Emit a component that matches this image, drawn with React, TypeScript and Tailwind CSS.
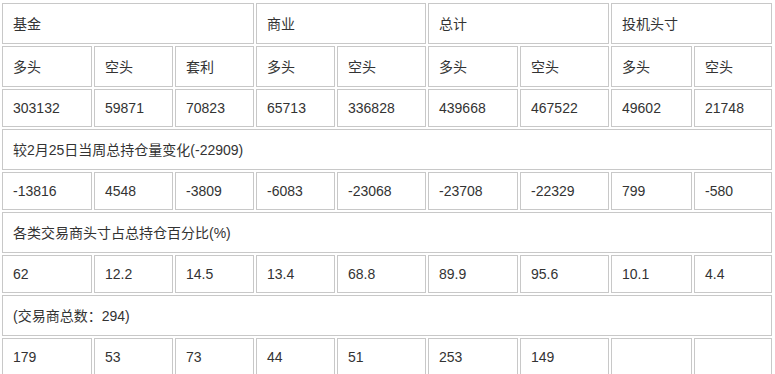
const widths = [90, 79, 79, 79, 89, 90, 89, 81, 78];

const rows: { cells: { text: string; span?: number }[]; tall: boolean }[] = [
  {
    tall: true,
    cells: [
      { text: "基金", span: 3 },
      { text: "商业", span: 2 },
      { text: "总计", span: 2 },
      { text: "投机头寸", span: 2 },
    ],
  },
  {
    tall: true,
    cells: ["多头", "空头", "套利", "多头", "空头", "多头", "空头", "多头", "空头"].map(t => ({ text: t })),
  },
  {
    tall: false,
    cells: ["303132", "59871", "70823", "65713", "336828", "439668", "467522", "49602", "21748"].map(t => ({ text: t })),
  },
  { tall: true, cells: [{ text: "较2月25日当周总持仓量变化(-22909)", span: 9 }] },
  {
    tall: false,
    cells: ["-13816", "4548", "-3809", "-6083", "-23068", "-23708", "-22329", "799", "-580"].map(t => ({ text: t })),
  },
  { tall: true, cells: [{ text: "各类交易商头寸占总持仓百分比(%)", span: 9 }] },
  {
    tall: false,
    cells: ["62", "12.2", "14.5", "13.4", "68.8", "89.9", "95.6", "10.1", "4.4"].map(t => ({ text: t })),
  },
  { tall: true, cells: [{ text: "(交易商总数：294)", span: 9 }] },
  {
    tall: false,
    cells: ["179", "53", "73", "44", "51", "253", "149", "", ""].map(t => ({ text: t })),
  },
];

export default function App() {
  return (
    <div className="bg-white h-[374px] overflow-hidden pt-px">
      <table
        className="table-fixed w-[774px] border-separate border-spacing-[2px] text-[14px] text-[#333]"
        style={{ fontFamily: '"Liberation Sans", Arial, "Noto Sans CJK SC", sans-serif' }}
      >
        <colgroup>
          {widths.map((w, i) => (
            <col key={i} style={{ width: w }} />
          ))}
        </colgroup>
        <tbody>
          {rows.map((row, r) => (
            <tr key={r} className={row.tall ? "h-[41px]" : "h-[38px]"}>
              {row.cells.map((c, i) => (
                <td
                  key={i}
                  colSpan={c.span}
                  className="border border-[#c8c8c8] pl-[10px] pr-1 py-0 align-middle whitespace-nowrap leading-5"
                >
                  {c.text}
                </td>
              ))}
            </tr>
          ))}
        </tbody>
      </table>
    </div>
  );
}
